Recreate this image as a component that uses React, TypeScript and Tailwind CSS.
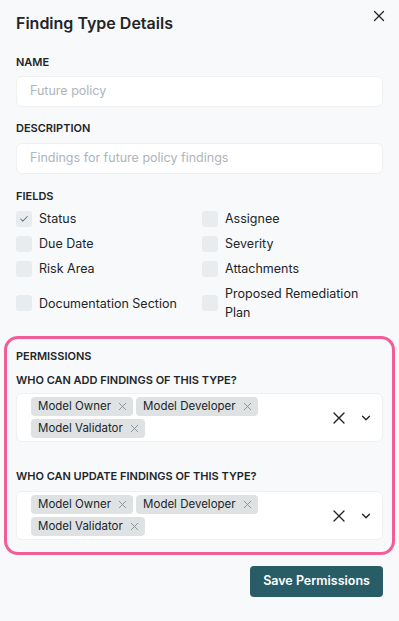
import { X, ChevronDown, Check } from "lucide-react"

const fields = [
  ["Status", true],
  ["Assignee", false],
  ["Due Date", false],
  ["Severity", false],
  ["Risk Area", false],
  ["Attachments", false],
  ["Documentation Section", false],
  ["Proposed Remediation Plan", false],
] as const

const roles = ["Model Owner", "Model Developer", "Model Validator"]

const Label = ({ children }: { children: React.ReactNode }) => (
  <div className="text-[11px] font-semibold leading-4 text-[#212529] uppercase">
    {children}
  </div>
)

const RoleSelect = () => (
  <div className="flex items-center bg-white border border-[#eef0f2] rounded-md h-[49px] pl-[14px] pr-[9px]">
    <div className="flex flex-wrap gap-[3px] w-[280px]">
      {roles.map((r) => (
        <span
          key={r}
          className="flex items-center gap-[5px] bg-[#dee2e3] rounded-[4px] h-[19px] pl-[7px] pr-[4px] text-[11.5px] text-[#212529]"
        >
          {r}
          <X className="w-[13px] h-[13px] text-[#868e96]" strokeWidth={1.7} />
        </span>
      ))}
    </div>
    <div className="flex items-center ml-auto gap-[10px]">
      <X className="w-5 h-5 text-[#212529]" strokeWidth={1.6} />
      <ChevronDown className="w-[14px] h-[14px] text-[#212529]" strokeWidth={2.4} />
    </div>
  </div>
)

export default function App() {
  return (
    <div
      className="min-h-[621px] w-[399px] bg-[#f8f9fa] px-4 pt-[11px] text-[#212529]"
      style={{ fontFamily: "Inter, 'Noto Sans', sans-serif" }}
    >
      <div className="flex items-start justify-between">
        <h1 className="text-[16px] font-semibold leading-6">Finding Type Details</h1>
        <X className="w-[18px] h-[18px] -mt-[4px] -mr-[5px]" strokeWidth={1.7} />
      </div>

      <div className="mt-[19px]">
        <Label>Name</Label>
        <div className="mt-[6px] h-[31px] bg-white border border-[#eef0f2] rounded-md flex items-center px-[13px] text-[12.5px] text-[#adb5bd]">
          Future policy
        </div>
      </div>

      <div className="mt-[13px]">
        <Label>Description</Label>
        <div className="mt-[7px] h-[31px] bg-white border border-[#eef0f2] rounded-md flex items-center px-[13px] text-[12.5px] text-[#adb5bd]">
          Findings for future policy findings
        </div>
      </div>

      <div className="mt-[14px]">
        <Label>Fields</Label>
        <div className="grid grid-cols-[186px_1fr] gap-y-[6px] mt-[5px]">
          {fields.map(([name, checked]) => (
            <div key={name} className="flex items-center gap-[7px]">
              <span className="w-4 h-4 shrink-0 rounded-[3px] bg-[#e9ecef] flex items-center justify-center">
                {checked && <Check className="w-[10px] h-[10px] text-[#6c757d]" strokeWidth={2.5} />}
              </span>
              <span className="text-[12.5px] leading-[19px] text-[#212529]">{name}</span>
            </div>
          ))}
        </div>
      </div>

      <div className="-mx-3 mt-[14px] border-[3px] border-[#f35c97] rounded-[14px] px-[9px] pt-[9px] pb-[12px]">
        <Label>Permissions</Label>
        <div className="mt-[8px]">
          <Label>Who can add findings of this type?</Label>
          <div className="mt-[5px]">
            <RoleSelect />
          </div>
        </div>
        <div className="mt-[26px]">
          <Label>Who can update findings of this type?</Label>
          <div className="mt-[7px]">
            <RoleSelect />
          </div>
        </div>
      </div>

      <div className="flex justify-end mt-[11px]">
        <button className="h-[31px] px-[13px] rounded-[4px] bg-[#285d67] text-white text-[12.5px] font-semibold">
          Save Permissions
        </button>
      </div>
    </div>
  )
}
